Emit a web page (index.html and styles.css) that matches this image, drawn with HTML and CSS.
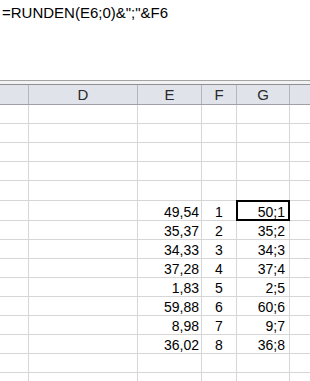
FILE: index.html
```html
<!DOCTYPE html>
<html>
<head>
<meta charset="utf-8">
<link rel="stylesheet" href="styles.css">
</head>
<body>
<div class="formula">=RUNDEN(E6;0)&amp;";"&amp;F6</div>
<div class="spacer"></div>
<div class="header">
  <div class="hc"></div>
  <div class="hc">D</div>
  <div class="hc">E</div>
  <div class="hc">F</div>
  <div class="hc">G</div>
  <div class="hc"></div>
</div>
<div class="sheet">
  <div class="c"></div><div class="c"></div><div class="c"></div><div class="c"></div><div class="c"></div><div class="c"></div>
  <div class="c"></div><div class="c"></div><div class="c"></div><div class="c"></div><div class="c"></div><div class="c"></div>
  <div class="c"></div><div class="c"></div><div class="c"></div><div class="c"></div><div class="c"></div><div class="c"></div>
  <div class="c"></div><div class="c"></div><div class="c"></div><div class="c"></div><div class="c"></div><div class="c"></div>
  <div class="c"></div><div class="c"></div><div class="c"></div><div class="c"></div><div class="c"></div><div class="c"></div>

  <div class="c"></div><div class="c"></div><div class="c num">49,54</div><div class="c mid">1</div><div class="c res sel">50;1</div><div class="c"></div>
  <div class="c"></div><div class="c"></div><div class="c num">35,37</div><div class="c mid">2</div><div class="c res">35;2</div><div class="c"></div>
  <div class="c"></div><div class="c"></div><div class="c num">34,33</div><div class="c mid">3</div><div class="c res">34;3</div><div class="c"></div>
  <div class="c"></div><div class="c"></div><div class="c num">37,28</div><div class="c mid">4</div><div class="c res">37;4</div><div class="c"></div>
  <div class="c"></div><div class="c"></div><div class="c num">1,83</div><div class="c mid">5</div><div class="c res">2;5</div><div class="c"></div>
  <div class="c"></div><div class="c"></div><div class="c num">59,88</div><div class="c mid">6</div><div class="c res">60;6</div><div class="c"></div>
  <div class="c"></div><div class="c"></div><div class="c num">8,98</div><div class="c mid">7</div><div class="c res">9;7</div><div class="c"></div>
  <div class="c"></div><div class="c"></div><div class="c num">36,02</div><div class="c mid">8</div><div class="c res">36;8</div><div class="c"></div>

  <div class="c"></div><div class="c"></div><div class="c"></div><div class="c"></div><div class="c"></div><div class="c"></div>
  <div class="c"></div><div class="c"></div><div class="c"></div><div class="c"></div><div class="c"></div><div class="c"></div>
</div>
</body>
</html>
```
FILE: styles.css
```css
html, body {
  margin: 0;
  padding: 0;
  background: #fff;
  overflow: hidden;
  width: 310px;
  height: 381px;
}
body {
  font-family: "Liberation Sans", Arial, sans-serif;
  color: #000;
}
.formula {
  box-sizing: border-box;
  height: 81px;
  padding: 4px 0 0 2px;
  font-size: 15px;
  line-height: 17px;
  border-bottom: 1px solid #a4a4a4;
  white-space: nowrap;
}
.spacer {
  height: 3px;
  background: #f2f2f2;
}
.header {
  display: grid;
  grid-template-columns: 28px 108px 63px 34px 52px 1fr;
  column-gap: 1px;
  background: #b3b7bf;
  border-top: 1px solid #8e9096;
  border-bottom: 1px solid #9da0a6;
  height: 19px;
}
.hc {
  background: #e0e3ea;
  font-size: 15px;
  color: #2a2a2a;
  display: flex;
  align-items: center;
  justify-content: center;
  line-height: 19px;
}
.sheet {
  display: grid;
  grid-template-columns: 28px 108px 63px 34px 52px 1fr;
  grid-template-rows: 18px 18px 18px 18px 19px 19px 18px 18px 18px 18px 18px 18px 18px 18px 18px;
  gap: 1px;
  background: #d6d6d6;
}
.c {
  background: #fff;
  font-size: 14px;
  line-height: 16px;
  display: flex;
  align-items: flex-end;
  white-space: nowrap;
}
.num {
  justify-content: flex-end;
  padding-right: 2px;
}
.mid {
  justify-content: center;
}
.res {
  justify-content: flex-end;
  padding-right: 4px;
}
.sel {
  position: relative;
}
.sel::after {
  content: "";
  position: absolute;
  left: -1px;
  top: -1px;
  right: -1px;
  bottom: -1px;
  border: 2px solid #000;
}
```
